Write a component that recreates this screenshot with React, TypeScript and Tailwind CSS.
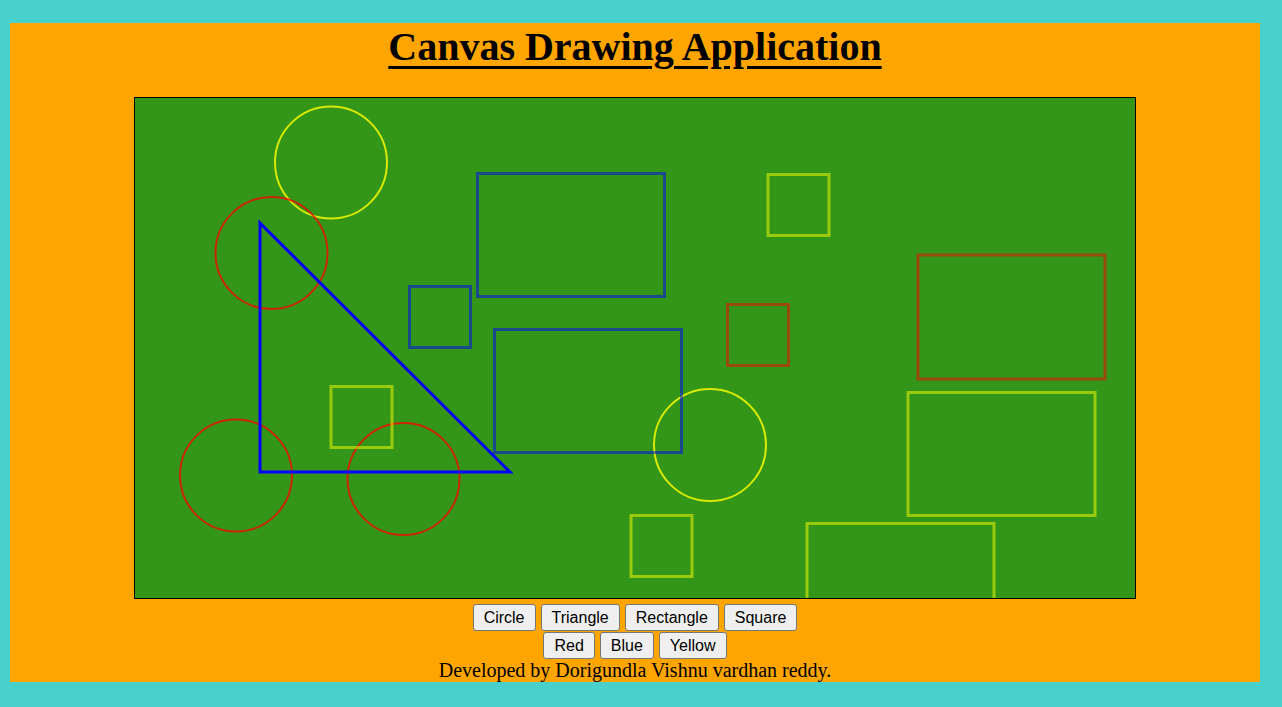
import React from "react";

type Shape =
  | { k: "c"; x: number; y: number; c: string }
  | { k: "r"; x: number; y: number; w: number; h: number; c: string };

const RED_A = "rgba(255,0,0,0.5)";
const BLUE_A = "rgba(0,0,255,0.5)";
const YEL_A = "rgba(255,255,0,0.5)";
const RED_C = "rgba(255,0,0,0.75)";
const YEL_C = "rgba(255,255,0,0.8)";

const shapes: Shape[] = [
  { k: "c", x: 196, y: 64.5, c: YEL_C },
  { k: "c", x: 136.5, y: 155, c: RED_C },
  { k: "c", x: 101, y: 377.5, c: RED_C },
  { k: "c", x: 268.5, y: 381, c: RED_C },
  { k: "c", x: 575, y: 347, c: YEL_C },
  { k: "r", x: 196, y: 288.5, w: 61, h: 61, c: YEL_A },
  { k: "r", x: 274.5, y: 188.5, w: 61, h: 61, c: BLUE_A },
  { k: "r", x: 633, y: 76.5, w: 61, h: 61, c: YEL_A },
  { k: "r", x: 592.5, y: 206.5, w: 61, h: 61, c: RED_A },
  { k: "r", x: 496, y: 417.5, w: 61, h: 61, c: YEL_A },
  { k: "r", x: 342.5, y: 75.5, w: 187, h: 123, c: BLUE_A },
  { k: "r", x: 359.5, y: 231.5, w: 187, h: 123, c: BLUE_A },
  { k: "r", x: 783, y: 157, w: 187, h: 124, c: RED_A },
  { k: "r", x: 773, y: 294.5, w: 187, h: 123, c: YEL_A },
  { k: "r", x: 672, y: 425.5, w: 187, h: 123, c: YEL_A },
];

function Btn({ children }: { children: React.ReactNode }) {
  return (
    <button className="mx-[2.5px] rounded-[3px] border border-[#767676] bg-[#efefef] px-[10px] py-[3px] text-[16px] leading-[19px] text-black [font-family:'Liberation_Sans',Arial,sans-serif]">
      {children}
    </button>
  );
}

export default function App() {
  return (
    <div className="min-h-screen bg-[#48d1cc] pt-[23px] pl-[10px] pr-[22px] pb-[25px]">
      <div className="flex flex-col items-center bg-[#ffa500] text-black [font-family:'Liberation_Serif','Times_New_Roman',serif]">
        <h1 className="mt-[2px] mb-[28px] text-[40px] font-bold leading-[44px] underline decoration-[3px] underline-offset-[6px]">
          Canvas Drawing Application
        </h1>
        <div className="border border-black bg-[#339618]">
          <svg width={1000} height={500} viewBox="0 0 1000 500" className="block">
            {shapes.map((s, i) =>
              s.k === "c" ? (
                <circle key={i} cx={s.x} cy={s.y} r={56} fill="none" stroke={s.c} strokeWidth={2} />
              ) : (
                <rect key={i} x={s.x} y={s.y} width={s.w} height={s.h} fill="none" stroke={s.c} strokeWidth={3} />
              )
            )}
            <polygon points="125,125 125,374 375,374" fill="none" stroke="#0000ff" strokeWidth={3} />
          </svg>
        </div>
        <div className="mt-[5px] flex">
          <Btn>Circle</Btn>
          <Btn>Triangle</Btn>
          <Btn>Rectangle</Btn>
          <Btn>Square</Btn>
        </div>
        <div className="mt-px flex">
          <Btn>Red</Btn>
          <Btn>Blue</Btn>
          <Btn>Yellow</Btn>
        </div>
        <p className="text-[20px] leading-[23px]">Developed by Dorigundla Vishnu vardhan reddy.</p>
      </div>
    </div>
  );
}
